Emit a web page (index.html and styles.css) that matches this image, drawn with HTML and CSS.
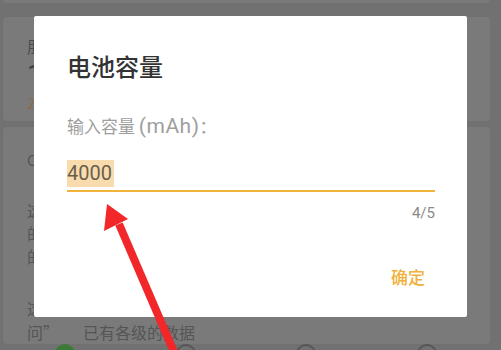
FILE: index.html
```html
<!DOCTYPE html>
<html lang="zh">
<head>
<meta charset="utf-8">
<link rel="stylesheet" href="styles.css">
</head>
<body>
<div class="app">
  <div class="card card-top"></div>
  <div class="card card-info">
    <div class="info-label">朋友</div>
    <div class="info-value">10</div>
    <div class="info-sub">2023</div>
  </div>
  <div class="card card-text">
    <div class="card-head">C 说明</div>
    <p class="line">这里</p>
    <p class="line">的电</p>
    <p class="line">的相</p>
    <p class="para">这款为 电脑，实际的功耗与计算的标准值“充电的</p>
    <p class="para">问”　　已有各级的数据</p>
  </div>
  <div class="nav">
    <span class="nav-icon green"></span>
    <span class="nav-icon"></span>
    <span class="nav-icon"></span>
    <span class="nav-icon"></span>
  </div>
</div>

<div class="dialog">
  <h1 class="dialog-title">电池容量</h1>
  <div class="field-label">输入容量 <span class="unit">(mAh)</span>：</div>
  <div class="field">
    <span class="field-value">4000</span>
  </div>
  <div class="counter">4/5</div>
  <div class="actions">
    <button class="btn-ok">确定</button>
  </div>
</div>

<svg class="arrow" width="501" height="350" viewBox="0 0 501 350">
  <line x1="119" y1="224" x2="174" y2="352" stroke="#f1272a" stroke-width="8"/>
  <polygon points="107,204 104,231 128,219" fill="#f1272a"/>
</svg>
</body>
</html>
```

FILE: styles.css
```css
html, body {
  margin: 0;
  padding: 0;
}
body {
  width: 501px;
  height: 350px;
  overflow: hidden;
  background: #717171;
  font-family: "Noto Sans CJK SC", "Noto Sans", sans-serif;
  position: relative;
}
.app {
  display: flex;
  flex-direction: column;
  gap: 6px;
  padding: 0 11px 0 3px;
  height: 350px;
  box-sizing: border-box;
}
.card {
  background: #7a7a7a;
  border-radius: 4px;
}
.card-top {
  height: 6px;
  margin-top: -2px;
  border-radius: 0 0 4px 4px;
  margin-bottom: 8px;
}
.card-info {
  height: 118px;
  padding: 18px 0 0 24px;
  box-sizing: border-box;
  color: #4a4a4a;
}
.info-label {
  font-size: 16px;
  line-height: 22px;
}
.info-value {
  font-size: 28px;
  line-height: 36px;
  font-family: Roboto, sans-serif;
  color: #404040;
}
.info-sub {
  font-size: 14px;
  line-height: 20px;
  color: #8a6a4a;
}
.card-text {
  flex: 1;
  padding: 22px 0 0 24px;
  color: #555;
}
.card-head {
  font-size: 15px;
  line-height: 22px;
  margin-bottom: 28px;
}
.line {
  margin: 0;
  font-size: 16px;
  line-height: 23px;
}
.para {
  margin: 0;
  font-size: 16px;
  line-height: 24px;
}
.line + .para {
  margin-top: 28px;
}
.nav {
  height: 6px;
  position: relative;
  display: flex;
  justify-content: space-between;
  padding: 0 53px 0 52px;
  margin-top: -6px;
}
.nav-icon {
  width: 20px;
  height: 20px;
  border-radius: 50%;
  border: 2px solid #555;
  box-sizing: border-box;
}
.nav-icon.green {
  background: #3d7a35;
  border-color: #3d7a35;
}

.dialog {
  position: absolute;
  left: 34px;
  top: 16px;
  width: 433px;
  height: 301px;
  box-sizing: border-box;
  background: #fff;
  border-radius: 2px;
  padding: 33px 32px 0 33px;
  display: flex;
  flex-direction: column;
}
.dialog-title {
  margin: 0;
  font-size: 24px;
  line-height: 34px;
  font-weight: 500;
  color: #333;
}
.field-label {
  margin-top: 31px;
  font-size: 17px;
  line-height: 24px;
  color: #9e9e9e;
}
.unit {
  font-family: Roboto, sans-serif;
  font-size: 21px;
  letter-spacing: 0.5px;
}
.field {
  margin-top: 22px;
  border-bottom: 2px solid #f0b43c;
  padding-bottom: 3px;
  display: flex;
}
.field-value {
  background: #f9dcae;
  font-family: Roboto, sans-serif;
  font-size: 20px;
  line-height: 27px;
  color: #6b5f4c;
  padding-right: 2px;
}
.counter {
  align-self: flex-end;
  margin-top: 12px;
  font-family: Roboto, sans-serif;
  font-size: 15px;
  line-height: 18px;
  color: #8a8a8a;
}
.actions {
  display: flex;
  justify-content: flex-end;
  margin-top: 43px;
  padding-right: 10px;
}
.btn-ok {
  border: 0;
  background: none;
  padding: 0;
  font-family: "Noto Sans CJK SC", sans-serif;
  font-size: 17px;
  line-height: 24px;
  font-weight: 500;
  color: #f1b13a;
}
.arrow {
  position: absolute;
  left: 0;
  top: 0;
}
```
